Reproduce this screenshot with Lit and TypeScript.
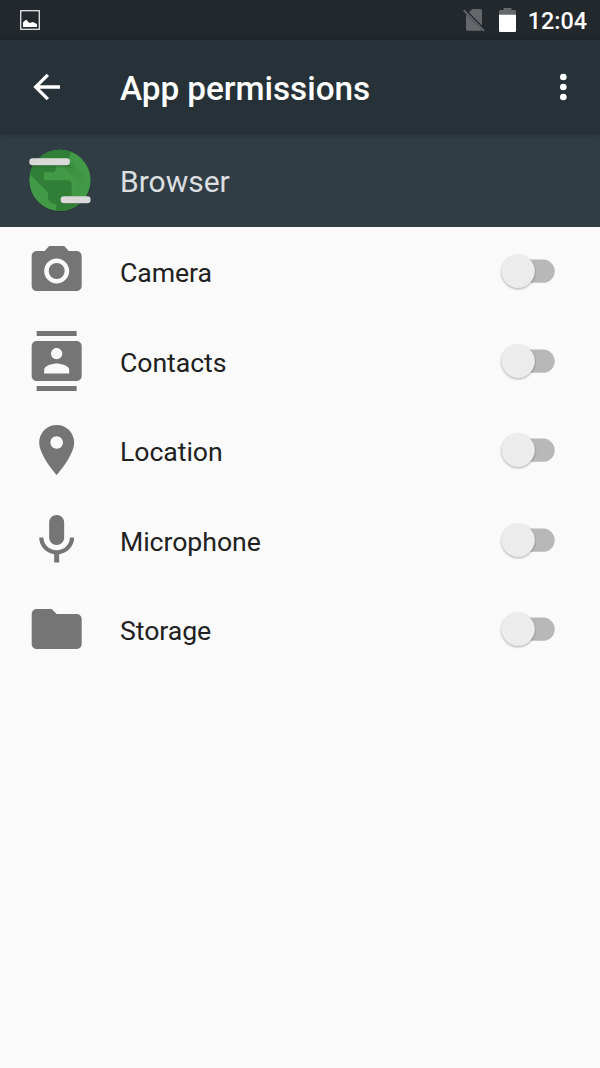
import { LitElement, html, css, svg } from "lit";
import { customElement, property } from "lit/decorators.js";

const PERMISSIONS = [
  {
    label: "Camera",
    icon: svg`<circle cx="12" cy="12" r="3.2"/><path d="M9 2L7.17 4H4c-1.1 0-2 .9-2 2v12c0 1.1.9 2 2 2h16c1.1 0 2-.9 2-2V6c0-1.1-.9-2-2-2h-3.17L15 2H9zm3 15c-2.76 0-5-2.24-5-5s2.24-5 5-5 5 2.24 5 5-2.24 5-5 5z"/>`,
  },
  {
    label: "Contacts",
    icon: svg`<path d="M20 0H4v2h16V0zM4 24h16v-2H4v2zM20 4H4c-1.1 0-2 .9-2 2v12c0 1.1.9 2 2 2h16c1.1 0 2-.9 2-2V6c0-1.1-.9-2-2-2zm-8 2.75c1.24 0 2.25 1.01 2.25 2.25s-1.01 2.25-2.25 2.25S9.75 10.24 9.75 9 10.76 6.75 12 6.75zM17 17H7v-1.5c0-1.67 3.33-2.5 5-2.5s5 .83 5 2.5V17z"/>`,
  },
  {
    label: "Location",
    icon: svg`<path d="M12 2C8.13 2 5 5.13 5 9c0 5.25 7 13 7 13s7-7.75 7-13c0-3.87-3.13-7-7-7zm0 9.5c-1.38 0-2.5-1.12-2.5-2.5s1.12-2.5 2.5-2.5 2.5 1.12 2.5 2.5-1.12 2.5-2.5 2.5z"/>`,
  },
  {
    label: "Microphone",
    icon: svg`<path d="M12 14c1.66 0 2.99-1.34 2.99-3L15 5c0-1.66-1.34-3-3-3S9 3.34 9 5v6c0 1.66 1.34 3 3 3zm5.3-3c0 3-2.54 5.1-5.3 5.1S6.7 14 6.7 11H5c0 3.41 2.72 6.23 6 6.72V21h2v-3.28c3.28-.48 6-3.3 6-6.72h-1.7z"/>`,
  },
  {
    label: "Storage",
    icon: svg`<path d="M10 4H4c-1.1 0-1.99.9-1.99 2L2 18c0 1.1.9 2 2 2h16c1.1 0 2-.9 2-2V8c0-1.1-.9-2-2-2h-8l-2-2z"/>`,
  },
];

@customElement("permission-switch")
export class PermissionSwitch extends LitElement {
  static styles = css`
    :host { display: block; }
    svg { display: block; overflow: visible; }
    .thumb { filter: drop-shadow(0 1.5px 1.2px rgba(0, 0, 0, 0.32)); }
  `;
  render() {
    return html`<svg width="54" height="36" viewBox="0 0 54 36">
      <rect x="6.3" y="6.5" width="47.4" height="23.3" rx="11.65" fill="#b8b8b8" />
      <circle class="thumb" cx="17.1" cy="18.2" r="16.7" fill="#ececec" />
    </svg>`;
  }
}

@customElement("permission-row")
export class PermissionRow extends LitElement {
  @property() label = "";
  @property({ attribute: false }) icon: unknown;

  static styles = css`
    :host {
      display: flex;
      align-items: center;
      height: 89.5px;
      padding: 0 45px 0 26.7px;
      box-sizing: border-box;
    }
    .icon { width: 60px; height: 60px; fill: #757575; flex: none; }
    .label {
      flex: 1;
      margin-left: 33.3px;
      padding-top: 3.4px;
      font-size: 26.67px;
      line-height: 32px;
      letter-spacing: -0.06px;
      color: #212121;
    }
  `;
  render() {
    return html`
      <svg class="icon" viewBox="0.13 0 24 24">${this.icon}</svg>
      <span class="label">${this.label}</span>
      <permission-switch></permission-switch>
    `;
  }
}

@customElement("app-root")
export class AppRoot extends LitElement {
  static styles = css`
    :host {
      display: flex;
      flex-direction: column;
      height: 1068px;
      overflow: hidden;
      background: #fafafa;
      font-family: Roboto, sans-serif;
    }
    svg { display: block; flex: none; overflow: visible; }
    .status {
      display: flex;
      align-items: center;
      height: 40px;
      box-sizing: border-box;
      padding: 0 13px 0 20px;
      background: #22282c;
      color: #fff;
    }
    .status-icons { display: flex; align-items: center; margin-left: auto; gap: 14px; }
    .clock { margin-left: 12px; padding-top: 2px; font-size: 23.33px; font-weight: 500; line-height: 28px; }
    .toolbar {
      display: flex;
      align-items: center;
      height: 93.3px;
      box-sizing: border-box;
      padding: 0 16.7px 0 26.7px;
      background: #263238;
      color: #fff;
      box-shadow: 0 1px 5px rgba(0, 0, 0, 0.4);
      z-index: 1;
    }
    .title {
      flex: 1;
      margin: 0 0 0 53.3px;
      padding-top: 4px;
      font-size: 33.33px;
      font-weight: 500;
      line-height: 40px;
      letter-spacing: -0.05px;
    }
    .app {
      display: flex;
      align-items: center;
      height: 93.4px;
      box-sizing: border-box;
      padding-left: 26.7px;
      background: #303d45;
    }
    .app-name { margin-left: 26.6px; padding-top: 5px; font-size: 30px; line-height: 36px; color: #dcdee0; }
  `;

  render() {
    return html`
      <div class="status">
        <svg width="20" height="20" viewBox="0 0 20 20">
          <rect x=".7" y=".7" width="18.6" height="18.6" fill="none" stroke="#e4e5e5" stroke-width="1.3" />
          <path d="M3 17V12.4L5.2 10.2 6.3 9.7 9.4 13 12.6 11.9 14 12.4 15.6 13.2 17 14.3V17Z" fill="#fff" />
        </svg>
        <div class="status-icons">
          <svg width="22" height="24" viewBox="0 0 22 24">
            <path d="M3 6.2L18.9 22.1Q18.3 22.8 17.3 22.8H4.8Q3 22.8 3 21ZM6.1 4.5L8.5 1.8Q9.2 1 10.2 1H17.2Q19 1 19 2.8V17.4Z" fill="#64686b" />
            <path d="M.7 2.1L21 22.9" stroke="#64686b" stroke-width="1.8" />
          </svg>
          <svg width="17" height="24" viewBox="0 0 17 24">
            <path d="M0 7V3.4Q0 2 1.4 2H4.6V0H12.4V2H15.6Q17 2 17 3.4V7Z" fill="#64686b" />
            <path d="M0 6.7H17V22.8Q17 24 15.8 24H1.2Q0 24 0 22.8Z" fill="#fff" />
          </svg>
        </div>
        <span class="clock">12:04</span>
      </div>
      <div class="toolbar">
        <svg width="40" height="40" viewBox="0.2 0 24 24">
          <path d="M20 11H7.83l5.59-5.59L12 4l-8 8 8 8 1.41-1.41L7.83 13H20v-2z" fill="#fff" />
        </svg>
        <h1 class="title">App permissions</h1>
        <svg width="40" height="40" viewBox="-0.2 0 24 24" fill="#fff">
          <circle cx="12" cy="6" r="2" /><circle cx="12" cy="12" r="2" /><circle cx="12" cy="18" r="2" />
        </svg>
      </div>
      <div class="app">
        <svg width="66.7" height="66.7" viewBox="1.2 0 200 200">
          <defs>
            <clipPath id="globe"><circle cx="100" cy="100" r="92" /></clipPath>
            <linearGradient id="shade" x1="0" y1="0" x2="1" y2="1">
              <stop offset="0" stop-color="#2e7d32" stop-opacity=".5" />
              <stop offset=".8" stop-color="#2e7d32" stop-opacity="0" />
            </linearGradient>
          </defs>
          <circle cx="100" cy="102" r="92.5" fill="#1c2b2b" opacity=".6" />
          <g clip-path="url(#globe)">
            <rect width="200" height="200" fill="#439a46" />
            <path d="M129 40L200 111V160H150V100L90 40Z" fill="url(#shade)" />
            <path d="M8 50H88V62Q88 76 75 76H52V100H124Q135 100 135 111V148H160L150 200H88V172Q64 170 64 148V136L8 80Z" fill="#317f36" />
            <path d="M8 0H136V13Q129 17 129 34H8Z" fill="#317f36" />
            <path d="M8 52H128L142 66 128 62H8Z" fill="#256d2b" opacity=".35" />
          </g>
          <rect x="8" y="36" width="122" height="21" rx="10" fill="#153f20" opacity=".4" />
          <rect x="102" y="150" width="90" height="21" rx="10" fill="#153f20" opacity=".4" />
          <rect x="8" y="34" width="122" height="21" rx="10" fill="#d9d9d9" />
          <rect x="102" y="148" width="90" height="21" rx="10" fill="#d9d9d9" />
        </svg>
        <span class="app-name">Browser</span>
      </div>
      ${PERMISSIONS.map((p) => html`<permission-row .label=${p.label} .icon=${p.icon}></permission-row>`)}
    `;
  }
}
